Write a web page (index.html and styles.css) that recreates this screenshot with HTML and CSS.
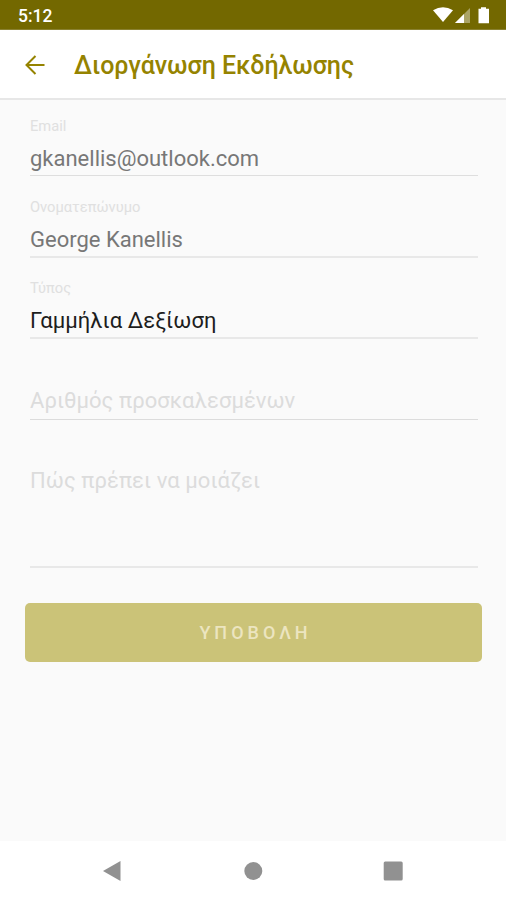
FILE: index.html
```html
<!DOCTYPE html>
<html lang="el">
<head>
<meta charset="utf-8">
<title>Διοργάνωση Εκδήλωσης</title>
<link rel="stylesheet" href="styles.css">
</head>
<body>
<div class="status">
  <span class="time">5:12</span>
  <svg class="status-icons" width="58" height="18" viewBox="0 0 58 18">
    <path d="M0 3.2Q10 -2.6 20 3.2L10 15Z" fill="#fff"/>
    <path d="M37 1V16H22Z" fill="#fff" opacity=".4"/>
    <path d="M31 7V16H22Z" fill="#fff"/>
    <path d="M48 1.8V0.3H53V1.8H56V16.3H45.5V1.8Z" fill="#fff"/>
  </svg>
</div>
<header class="appbar">
  <svg class="back" width="22" height="22" viewBox="0 0 22 22"><path d="M20.5 11H3M11.5 2L2.5 11L11.5 20" fill="none" stroke="#958300" stroke-width="2"/></svg>
  <h1>Διοργάνωση Εκδήλωσης</h1>
</header>
<main>
  <div class="field"><label>Email</label><div class="value">gkanellis@outlook.com</div></div>
  <div class="field"><label>Ονοματεπώνυμο</label><div class="value">George Kanellis</div></div>
  <div class="field"><label>Τύπος</label><div class="value dark">Γαμμήλια Δεξίωση</div></div>
  <div class="field empty"><div class="value">Αριθμός προσκαλεσμένων</div></div>
  <div class="field area"><div class="value">Πώς πρέπει να μοιάζει</div></div>
  <button>ΥΠΟΒΟΛΗ</button>
</main>
<nav>
  <svg width="20" height="22" viewBox="0 0 20 22"><path d="M0 11L17.5 1V21Z" fill="#919191"/></svg>
  <svg width="20" height="20" viewBox="0 0 20 20"><circle cx="10.3" cy="10" r="9" fill="#919191"/></svg>
  <svg width="20" height="20" viewBox="0 0 20 20"><rect x=".7" y=".5" width="19" height="19" rx="1.5" fill="#919191"/></svg>
</nav>
</body>
</html>
```
FILE: styles.css
```css
* { box-sizing: border-box; }
body {
  margin: 0;
  height: 900px;
  display: flex;
  flex-direction: column;
  background: #fafafa;
  font-family: Roboto, "Liberation Sans", sans-serif;
}
.status {
  height: 30px;
  flex: none;
  display: flex;
  justify-content: space-between;
  align-items: center;
  padding: 2px 15px 0 18px;
  background: #736800;
  border-bottom: 1px solid #8a8130;
}
.time { color: #fff; font-size: 17.5px; font-weight: 500; line-height: 20px; }
.appbar {
  height: 70px;
  flex: none;
  display: flex;
  align-items: center;
  padding: 1px 0 0 24px;
  background: #fff;
  border-bottom: 2px solid #e7e7e7;
}
h1 {
  margin: 2px 0 0 28px;
  color: #958300;
  font-size: 25px;
  font-weight: 500;
  line-height: 32px;
  letter-spacing: -0.06px;
}
main { flex: 1; padding: 0 28px 0 30px; }
.field {
  height: 81px;
  display: flex;
  flex-direction: column;
  justify-content: flex-end;
  border-bottom: 2px solid #e8e8e8;
}
.field:first-child { height: 76px; border-bottom-width: 1px; border-color: #dedede; }
.field:nth-child(2) { height: 82px; }
label { color: #e0e0e0; font-size: 14.7px; line-height: 18px; margin-bottom: 11px; }
.value {
  color: #777;
  font-size: 22px;
  line-height: 26px;
  padding-bottom: 3px;
  box-sizing: content-box;
  white-space: nowrap;
}
.dark { color: #1d1d1d; letter-spacing: 0.06px; }
.empty { border-bottom: 1px solid #dcdcdc; }
.empty .value, .area .value { color: #dcdcdc; padding-bottom: 5px; letter-spacing: 0.05px; }
.area { height: 148px; justify-content: flex-start; padding-top: 48px; }
button {
  display: block;
  width: 457px;
  height: 59px;
  margin: 35px 0 0 -5px;
  padding: 0 0 0 4px;
  border: 0;
  border-radius: 5px;
  background: #cbc378;
  color: #ece5c0;
  font: 500 18px/22px Roboto, "Liberation Sans", sans-serif;
  letter-spacing: 4px;
}
nav {
  height: 59px;
  flex: none;
  display: flex;
  justify-content: space-between;
  align-items: center;
  padding: 0 103px;
  background: #fff;
}
```
